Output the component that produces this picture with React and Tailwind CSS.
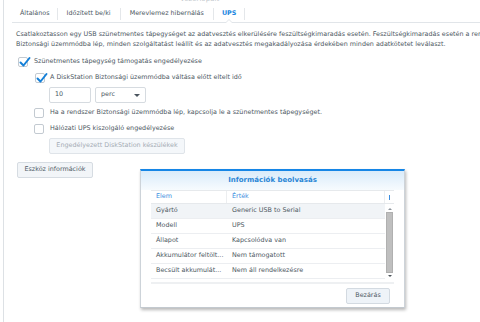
import React from "react";

const Check = ({ checked }) => (
  <span className="relative flex-none w-[10px] h-[10px] rounded-[2px] border border-[#c3cad1] bg-white">
    {checked && (
      <svg className="absolute left-[0px] top-[-2px]" width="12" height="12" viewBox="0 0 12 12">
        <path d="M1.5 6.5 L4.5 9.5 L10.5 2" fill="none" stroke="#1580d8" strokeWidth="2" strokeLinecap="round" strokeLinejoin="round" />
      </svg>
    )}
  </span>
);

const rows = [
  ["Gyártó", "Generic USB to Serial"],
  ["Modell", "UPS"],
  ["Állapot", "Kapcsolódva van"],
  ["Akkumulátor feltölt...", "Nem támogatott"],
  ["Becsült akkumulát...", "Nem áll rendelkezésre"],
];

const App = () => {
  return (
    <div className="relative w-[480px] h-[322px] overflow-hidden bg-white font-['DejaVu_Sans',sans-serif] text-[6.4px] text-[#4c5762]">
      <div className="ml-[3px] h-full border-l border-[#dde1e5]">
        <div className="h-[5px] overflow-hidden">
          <div className="mt-[-5px] pl-[176px] text-[7px] text-[#c4c9ce] leading-[8px]">Vezérlőpult</div>
        </div>
        <div className="ml-[8px] flex items-center h-[18px] border-b border-[#e1e5e9]">
          <span className="pl-[8px] pr-[7px]">Általános</span>
          <span className="w-px h-[12px] bg-[#e4e7ea]" />
          <span className="pl-[9px] pr-[9px]">Időzített be/ki</span>
          <span className="w-px h-[12px] bg-[#e4e7ea]" />
          <span className="pl-[9px] pr-[9px]">Merevlemez hibernálás</span>
          <span className="w-px h-[12px] bg-[#e4e7ea]" />
          <span className="relative h-full flex items-center pl-[8px] pr-[8px] font-bold text-[#1a86e0]">
            UPS
            <span className="absolute left-[11px] bottom-[-1px] w-0 h-0 border-x-[4px] border-x-transparent border-b-[4px] border-b-[#e1e5e9]" />
            <span className="absolute left-[12px] bottom-[-1px] w-0 h-0 border-x-[3px] border-x-transparent border-b-[3px] border-b-white" />
          </span>
          <span className="w-px h-[12px] bg-[#e4e7ea]" />
        </div>
        <div className="pl-[12px] flex flex-col">
          <p className="mt-[6px] leading-[10px] whitespace-nowrap">
            Csatlakoztasson egy USB szünetmentes tápegységet az adatvesztés elkerülésére feszültségkimaradás esetén. Feszültségkimaradás esetén a rendszer
            <br />
            Biztonsági üzemmódba lép, minden szolgáltatást leállít és az adatvesztés megakadályozása érdekében minden adatkötetet leválaszt.
          </p>
          <div className="mt-[7px] ml-[2px] flex items-center gap-[6px] h-[11px]">
            <Check checked />
            <span>Szünetmentes tápegység támogatás engedélyezése</span>
          </div>
          <div className="mt-[5px] ml-[19px] flex items-center gap-[5px] h-[11px]">
            <Check checked />
            <span>A DiskStation Biztonsági üzemmódba váltása előtt eltelt idő</span>
          </div>
          <div className="mt-[4px] ml-[33px] flex gap-[4px] h-[16px]">
            <div className="w-[42px] border border-[#d6dbe0] rounded-[2px] flex items-center pl-[5px]">10</div>
            <div className="w-[51px] border border-[#d6dbe0] rounded-[2px] flex items-center justify-between pl-[5px] pr-[5px]">
              <span>perc</span>
              <span className="w-0 h-0 border-x-[3px] border-x-transparent border-t-[3px] border-t-[#4a545e]" />
            </div>
          </div>
          <div className="mt-[4px] ml-[18px] flex items-center gap-[6px] h-[11px]">
            <Check />
            <span className="whitespace-nowrap">Ha a rendszer Biztonsági üzemmódba lép, kapcsolja le a szünetmentes tápegységet.</span>
          </div>
          <div className="mt-[5px] ml-[18px] flex items-center gap-[6px] h-[11px]">
            <Check />
            <span>Hálózati UPS kiszolgáló engedélyezése</span>
          </div>
          <div className="mt-[4px] ml-[33px] w-[136px] h-[16px] flex items-center justify-center rounded-[2px] border border-[#dfe4e9] bg-[#f4f7fa] text-[#a4acb4]">
            Engedélyezett DiskStation készülékek
          </div>
          <div className="mt-[8px] ml-[1px] w-[76px] h-[16px] flex items-center justify-center rounded-[2px] border border-[#d6dce2] bg-[#f2f5f8] text-[#4f5a65]">
            Eszköz információk
          </div>
        </div>
      </div>

      <div className="absolute left-[140px] top-[169px] w-[265px] h-[139px] bg-white border-t-2 border-t-[#1686e6] border-x border-b border-x-[#cdd3d9] border-b-[#c3c9cf] shadow-[1px_2px_3px_rgba(0,0,0,0.28)] flex flex-col">
        <div className="h-[19px] flex-none bg-gradient-to-b from-[#d9ebfa] to-[#f7fbfe] flex items-center justify-center font-bold text-[7px] text-[#2b86d6]">
          Információk beolvasás
        </div>
        <div className="mx-[10px] flex flex-col">
          <div className="flex h-[14px] border-t border-b border-[#e6e9ec] text-[#3c8ee0]">
            <div className="w-[76px] flex items-center pl-[5px] border-r border-[#eceef0]">Elem</div>
            <div className="flex-1 flex items-center pl-[5px] border-r border-[#eceef0]">Érték</div>
            <div className="w-[9px] flex items-center justify-center">
              <span className="w-px h-[5px] bg-[#3c8ee0]" />
            </div>
          </div>
          <div className="relative h-[80px] border-b-2 border-[#eef0f2] flex">
            <div className="flex-1 flex flex-col">
              {rows.map((r, i) => (
                <div
                  key={r[0]}
                  className={`flex h-[15px] items-center border-b border-[#eceef1] ${i === 0 ? "bg-[#f1f4f7]" : ""}`}
                >
                  <div className="w-[76px] pl-[5px] whitespace-nowrap overflow-hidden">{r[0]}</div>
                  <div className="pl-[5px] whitespace-nowrap">{r[1]}</div>
                </div>
              ))}
            </div>
            <div className="w-[9px] flex flex-col items-center pt-[2px] pb-[3px]">
              <div className="h-[6px] flex items-center">
                <span className="w-0 h-0 border-x-[2px] border-x-transparent border-b-[2px] border-b-[#8d949b]" />
              </div>
              <div className="flex-1 w-[7px] bg-[#bfbfbf] border border-[#b0b0b0]" />
              <div className="h-[6px] flex items-center">
                <span className="w-0 h-0 border-x-[2px] border-x-transparent border-t-[2px] border-t-[#4d545b]" />
              </div>
            </div>
          </div>
        </div>
        <div className="flex justify-end pr-[14px] mt-[4px]">
          <div className="w-[44px] h-[16px] flex items-center justify-center rounded-[2px] border border-[#d3dae1] bg-[#eef3f8] text-[#4f5a65]">
            Bezárás
          </div>
        </div>
      </div>
    </div>
  );
};

export default App;
